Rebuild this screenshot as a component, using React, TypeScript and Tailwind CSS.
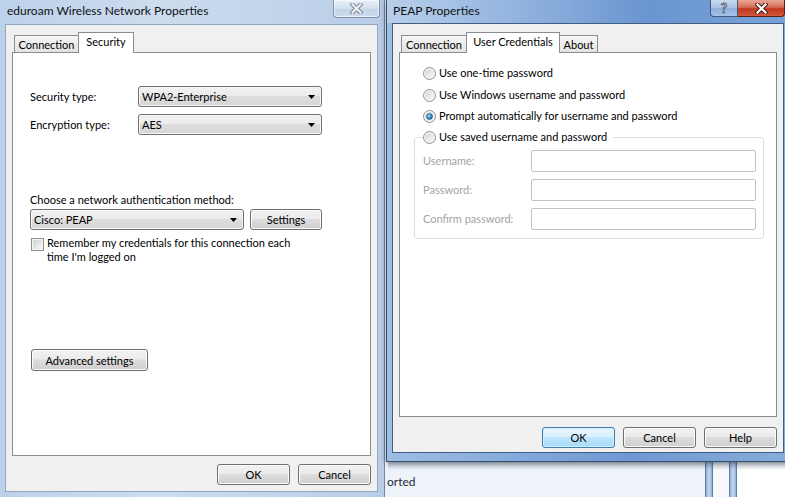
import React from "react";

const btnBase =
  "h-[21px] rounded-[3px] border border-[#707070] bg-[linear-gradient(#f2f2f2_0%,#ebebeb_45%,#dddddd_50%,#cfcfcf_100%)] shadow-[inset_0_0_0_1px_#fbfbfb] text-[11px] leading-[19px] text-black text-center whitespace-nowrap";
const okBtn =
  "h-[21px] rounded-[3px] border border-[#3c7fb1] bg-[linear-gradient(#eaf6fd_0%,#d9f0fc_45%,#bee6fd_50%,#a7d9f5_100%)] shadow-[inset_0_0_0_1px_#d6eefb] text-[11px] leading-[19px] text-black text-center";

function XGlyph({ fill, stroke }: { fill: string; stroke: string }) {
  return (
    <svg width="13" height="11" viewBox="0 0 13 11">
      <path d="M2.5 1.5 L10.5 9.5 M10.5 1.5 L2.5 9.5" stroke={stroke} strokeWidth="4.2" strokeLinecap="square" />
      <path d="M2.5 1.5 L10.5 9.5 M10.5 1.5 L2.5 9.5" stroke={fill} strokeWidth="2.2" strokeLinecap="square" />
    </svg>
  );
}

function Select({ value, w }: { value: string; w: string }) {
  return (
    <div
      className={`${w} h-[21px] rounded-[3px] border border-[#707070] bg-[linear-gradient(#f2f2f2_0%,#ebebeb_45%,#dddddd_50%,#d6d6d6_100%)] shadow-[inset_0_0_0_1px_#f8f8f8] flex items-center pl-[3px] pr-[6px]`}
    >
      <span className="flex-1 text-[11px] leading-[16px] whitespace-nowrap">{value}</span>
      <svg width="7" height="4" viewBox="0 0 7 4">
        <path d="M0 0h7L3.5 4z" fill="#000" />
      </svg>
    </div>
  );
}

function Radio({ checked }: { checked?: boolean }) {
  return (
    <svg width="13" height="13" viewBox="0 0 13 13" className="shrink-0">
      <defs>
        <linearGradient id="rbg" x1="0" y1="0" x2="1" y2="1">
          <stop offset="0" stopColor="#cfd3d8" />
          <stop offset="1" stopColor="#fafafa" />
        </linearGradient>
        <radialGradient id="rdot" cx="0.4" cy="0.4" r="0.7">
          <stop offset="0" stopColor="#a8e1fb" />
          <stop offset="0.5" stopColor="#3c90c8" />
          <stop offset="1" stopColor="#1a4f7a" />
        </radialGradient>
      </defs>
      <circle cx="6.5" cy="6.5" r="6" fill="#f4f4f4" stroke="#8e8f8f" />
      <circle cx="6.5" cy="6.5" r="4.3" fill="url(#rbg)" />
      {checked && <circle cx="6.5" cy="6.5" r="3" fill="url(#rdot)" stroke="#1f5a87" strokeWidth="0.6" />}
    </svg>
  );
}

function Tab({ label, selected, w }: { label: string; selected?: boolean; w: string }) {
  return selected ? (
    <div
      className={`${w} h-[21px] -ml-px border border-b-0 border-[#898c95] bg-white text-[11px] leading-[18px] text-center whitespace-nowrap`}
    >
      {label}
    </div>
  ) : (
    <div
      className={`${w} h-[17px] mb-[1px] -ml-px first:ml-0 border border-b-0 border-[#898c95] bg-[linear-gradient(#f6f6f6,#e3e3e3)] text-[11px] leading-[17px] text-center whitespace-nowrap`}
    >
      {label}
    </div>
  );
}

function Field({ label }: { label: string }) {
  return (
    <div className="flex items-center h-[22px]">
      <span className="w-[108px] ml-[8px] text-[11px] text-[#a3a3a3] whitespace-nowrap">{label}</span>
      <div className="ml-auto mr-[7px] w-[225px] h-[22px] border border-[#c0c2c6] rounded-[2px] bg-white" />
    </div>
  );
}

export default function App() {
  return (
    <div className="relative w-[785px] h-[497px] overflow-hidden bg-[#eef3fa] font-['Lato',sans-serif] text-black">
      {/* background application visible under right window */}
      <div className="absolute left-[385px] top-[455px] w-[400px] h-[42px] flex">
        <div className="w-[320px] bg-[#eef3fa] pt-[19px] pl-[2px] text-[12px] leading-[16px] text-[#1e2a3a]">
          orted
        </div>
        <div className="w-[8px] bg-[linear-gradient(90deg,#8fb0d8,#c9dbf0,#8fb0d8)] border-x border-[#5f7fa8]" />
        <div className="w-[16px] bg-[#f7f9fc]" />
        <div className="w-[8px] bg-[linear-gradient(90deg,#8fb0d8,#c9dbf0,#8fb0d8)] border-x border-[#5f7fa8]" />
        <div className="flex-1 bg-white" />
      </div>

      {/* Left window: eduroam Wireless Network Properties */}
      <div className="absolute left-0 top-0 w-[385px] h-[510px] bg-[linear-gradient(90deg,#bcd1ea,#cddcee_40%,#c2d5eb_70%,#b8cde7)] border-r border-[#6f87a8] flex flex-col">
        <div className="h-[24px] flex items-start">
          <span className="ml-[7px] mt-[2px] text-[12px] leading-[18px] text-[#111] whitespace-nowrap">
            eduroam Wireless Network Properties
          </span>
          <div className="ml-auto mr-[4px] w-[47px] h-[18px] rounded-b-[4px] border border-t-0 border-[#7d90ab] bg-[linear-gradient(#e6eef7,#d3e0ef_50%,#c2d3e7_51%,#cddcee)] shadow-[inset_0_0_0_1px_rgba(255,255,255,0.6)] flex items-center justify-center">
            <XGlyph fill="#eef1f5" stroke="#7b8799" />
          </div>
        </div>
        <div className="ml-[5px] w-[373px] h-[468px] border border-[#95a8c2] bg-[#f0f0f0] px-[6px] pt-[8px] flex flex-col">
          <div className="relative z-10 flex items-end h-[20px] -mb-px pl-[2px]">
            <Tab label="Connection" w="w-[65px]" />
            <Tab label="Security" w="w-[56px]" selected />
          </div>
          <div className="h-[404px] border border-[#898c95] bg-white pl-[17px] flex flex-col text-[11px] leading-[16px]">
            <div className="mt-[33px] flex items-center h-[21px]">
              <span className="w-[108px]">Security type:</span>
              <Select value="WPA2-Enterprise" w="w-[184px]" />
            </div>
            <div className="mt-[7px] flex items-center h-[21px]">
              <span className="w-[108px]">Encryption type:</span>
              <Select value="AES" w="w-[184px]" />
            </div>
            <div className="mt-[57px] h-[16px] whitespace-nowrap">Choose a network authentication method:</div>
            <div className="mt-[1px] flex items-center gap-[6px]">
              <Select value="Cisco: PEAP" w="w-[214px]" />
              <button className={`${btnBase} w-[72px]`}>Settings</button>
            </div>
            <div className="mt-[6px] flex items-start">
              <div className="mt-[2px] ml-[1px] w-[13px] h-[13px] border border-[#8e8f8f] bg-[#f4f4f4] p-[1px] shrink-0">
                <div className="w-full h-full bg-[linear-gradient(135deg,#cfd2d6,#f7f7f7)]" />
              </div>
              <div className="ml-[3px] leading-[14px] whitespace-nowrap">
                Remember my credentials for this connection each
                <br />
                time I'm logged on
              </div>
            </div>
            <div className="mt-[85px] ml-[1px]">
              <button className={`${btnBase} w-[117px] h-[22px]`}>Advanced settings</button>
            </div>
          </div>
          <div className="mt-[8px] flex justify-end gap-[8px]">
            <button className={`${btnBase} w-[73px]`}>OK</button>
            <button className={`${btnBase} w-[73px]`}>Cancel</button>
          </div>
        </div>
      </div>

      {/* shadow under right window */}
      <div className="absolute left-[388px] top-[462px] w-[400px] h-[8px] bg-[linear-gradient(rgba(40,60,90,0.35),rgba(40,60,90,0))]" />

      {/* Right window: PEAP Properties */}
      <div className="absolute left-[386px] top-0 w-[405px] h-[462px] border border-t-0 border-[#34506f] bg-[linear-gradient(90deg,#9fbde3,#86abdc_30%,#6f98d3_60%,#88add9)] flex flex-col shadow-[0_0_6px_rgba(0,0,0,0.4)]">
        <div className="h-[23px] flex items-start bg-[linear-gradient(90deg,#b8cfea,#8fb1de_35%,#6a95d0_65%,#7aa2d5)]">
          <span className="ml-[6px] mt-[2px] text-[12px] leading-[18px] text-[#111] whitespace-nowrap">PEAP Properties</span>
          <div className="ml-auto mr-[5px] flex h-[18px]">
            <div className="w-[28px] h-[17px] rounded-bl-[4px] border border-t-0 border-[#3d5a80] bg-[linear-gradient(#c9daf0,#a9c3e6_50%,#8fb0dc_51%,#a6c3e8)] flex items-center justify-center">
              <span className="text-[14px] leading-[14px] font-bold text-white [-webkit-text-stroke:0.8px_#3a4a60]">?</span>
            </div>
            <div className="w-[47px] h-[17px] rounded-br-[4px] border border-t-0 border-l-0 border-[#5a1f16] bg-[linear-gradient(#e9a796,#d66d56_45%,#c2381f_55%,#d4583b)] flex items-center justify-center">
              <XGlyph fill="#ffffff" stroke="#4a1d16" />
            </div>
          </div>
        </div>
        <div className="ml-[5px] w-[392px] h-[430px] border border-[#3f5d85] bg-[#f0f0f0] px-[6px] pt-[9px] flex flex-col">
          <div className="relative z-10 flex items-end h-[20px] -mb-px pl-[2px]">
            <Tab label="Connection" w="w-[66px]" />
            <Tab label="User Credentials" w="w-[94px]" selected />
            <Tab label="About" w="w-[39px]" />
          </div>
          <div className="h-[365px] border border-[#898c95] bg-white pl-[14px] pr-[12px] flex flex-col text-[11px] leading-[16px]">
            <div className="mt-[12px] ml-[9px] flex items-center h-[16px] gap-[3px]">
              <Radio />
              <span>Use one-time password</span>
            </div>
            <div className="mt-[6px] ml-[9px] flex items-center h-[16px] gap-[3px]">
              <Radio />
              <span>Use Windows username and password</span>
            </div>
            <div className="mt-[5px] ml-[9px] flex items-center h-[16px] gap-[3px]">
              <Radio checked />
              <span>Prompt automatically for username and password</span>
            </div>
            <div className="mt-[13px] h-[102px] border border-[#d5dfe5] rounded-[3px] flex flex-col pb-[8px]">
              <div className="-mt-[9px] ml-[8px] w-fit pr-[6px] bg-white flex items-center h-[16px] gap-[3px]">
                <Radio />
                <span>Use saved username and password</span>
              </div>
              <div className="mt-[5px] flex flex-col gap-[7px]">
                <Field label="Username:" />
                <Field label="Password:" />
                <Field label="Confirm password:" />
              </div>
            </div>
          </div>
          <div className="mt-[10px] flex justify-end gap-[8px]">
            <button className={`${okBtn} w-[73px]`}>OK</button>
            <button className={`${btnBase} w-[73px]`}>Cancel</button>
            <button className={`${btnBase} w-[73px]`}>Help</button>
          </div>
        </div>
      </div>
    </div>
  );
}
